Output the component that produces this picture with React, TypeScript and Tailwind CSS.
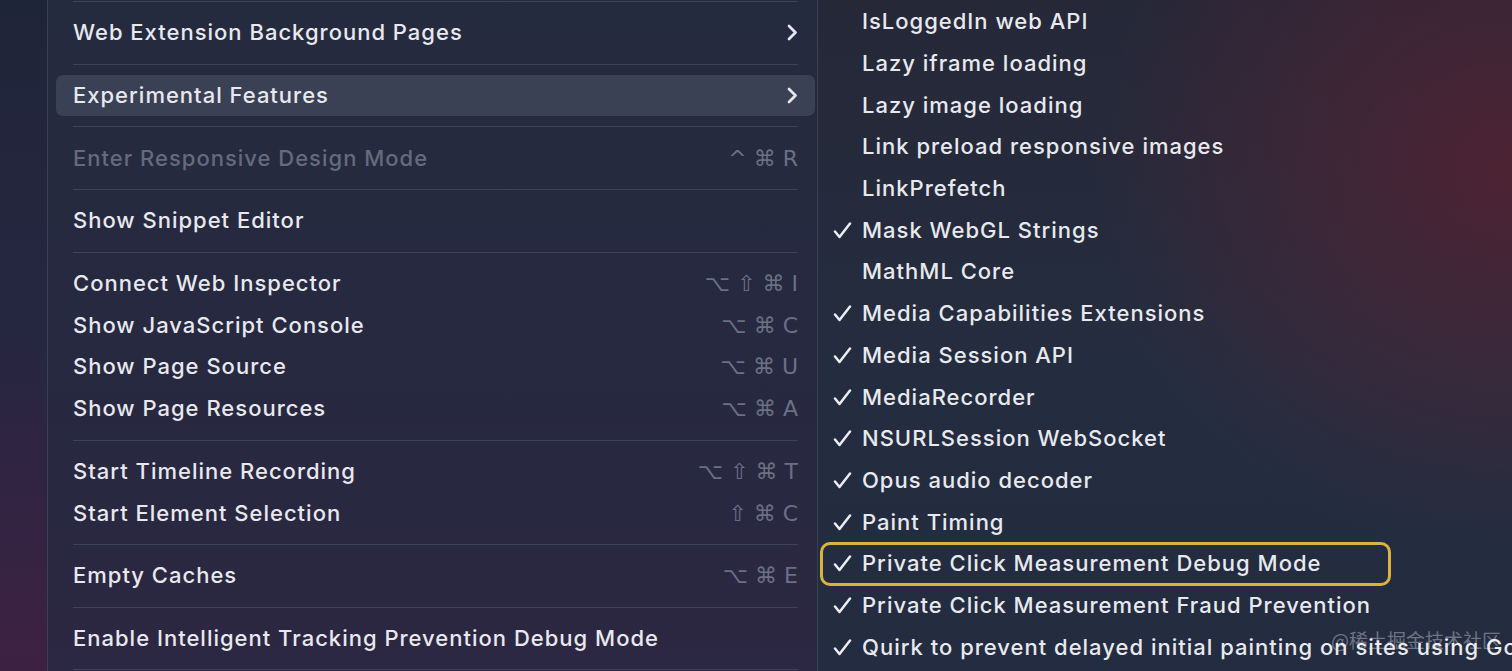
import React from 'react';

type Item = { label: string; keys?: string[]; sub?: boolean; disabled?: boolean; active?: boolean };

const sections: Item[][] = [
  [{ label: 'Web Extension Background Pages', sub: true }],
  [{ label: 'Experimental Features', sub: true, active: true }],
  [{ label: 'Enter Responsive Design Mode', keys: ['^', '⌘', 'R'], disabled: true }],
  [{ label: 'Show Snippet Editor' }],
  [
    { label: 'Connect Web Inspector', keys: ['⌥', '⇧', '⌘', 'I'] },
    { label: 'Show JavaScript Console', keys: ['⌥', '⌘', 'C'] },
    { label: 'Show Page Source', keys: ['⌥', '⌘', 'U'] },
    { label: 'Show Page Resources', keys: ['⌥', '⌘', 'A'] },
  ],
  [
    { label: 'Start Timeline Recording', keys: ['⌥', '⇧', '⌘', 'T'] },
    { label: 'Start Element Selection', keys: ['⇧', '⌘', 'C'] },
  ],
  [{ label: 'Empty Caches', keys: ['⌥', '⌘', 'E'] }],
  [{ label: 'Enable Intelligent Tracking Prevention Debug Mode' }],
];

const features: { label: string; on: boolean; boxed?: boolean }[] = [
  { label: 'IsLoggedIn web API', on: false },
  { label: 'Lazy iframe loading', on: false },
  { label: 'Lazy image loading', on: false },
  { label: 'Link preload responsive images', on: false },
  { label: 'LinkPrefetch', on: false },
  { label: 'Mask WebGL Strings', on: true },
  { label: 'MathML Core', on: false },
  { label: 'Media Capabilities Extensions', on: true },
  { label: 'Media Session API', on: true },
  { label: 'MediaRecorder', on: true },
  { label: 'NSURLSession WebSocket', on: true },
  { label: 'Opus audio decoder', on: true },
  { label: 'Paint Timing', on: true },
  { label: 'Private Click Measurement Debug Mode', on: true, boxed: true },
  { label: 'Private Click Measurement Fraud Prevention', on: true },
  { label: 'Quirk to prevent delayed initial painting on sites using Google Fonts', on: true },
];

function Chevron() {
  return (
    <svg width="11" height="17" viewBox="0 0 11 17" fill="none">
      <path d="M2 2 L8.5 8.5 L2 15" stroke="#e6e7ee" strokeWidth="2.8" strokeLinecap="round" strokeLinejoin="round" />
    </svg>
  );
}

function Check() {
  return (
    <svg width="19" height="17" viewBox="0 0 19 17" fill="none">
      <path d="M2 9.5 L6.5 15 L17 1.5" stroke="#eceef3" strokeWidth="2.5" strokeLinecap="round" strokeLinejoin="round" />
    </svg>
  );
}

function Separator() {
  return <div className="h-px bg-[#3d4257]" />;
}

function MenuRow({ item }: { item: Item }) {
  return (
    <div
      className={`-mx-[17px] px-[17px] h-[41.7px] flex items-center justify-between rounded-[7px] ${
        item.active ? 'bg-[#3b4154]' : ''
      }`}
    >
      <span className={item.disabled ? 'text-[#656a7e]' : 'text-[#e8e8ee]'}>{item.label}</span>
      {item.sub && <Chevron />}
      {item.keys && (
        <span className="flex items-center gap-[7px] text-[22px] tracking-normal text-[#6b7084] font-['DejaVu_Sans',sans-serif] font-normal">
          {item.keys.map((k, i) => (
            <span key={i}>{k}</span>
          ))}
        </span>
      )}
    </div>
  );
}

export default function App() {
  return (
    <div className="relative w-[1512px] h-[671px] overflow-hidden flex font-['Inter','Liberation_Sans',sans-serif] text-[22px] font-medium tracking-[1px]">
      {/* window behind the menu */}
      <div className="w-[47px] shrink-0 bg-gradient-to-b from-[#1f2539] via-[#262641] to-[#3d2143]" />

      {/* main Develop menu */}
      <div className="w-[770px] shrink-0 border-l border-[#3c4057] bg-gradient-to-b from-[#252b3e] via-[#262940] to-[#2c2742] pl-[25px] pr-[19px] pt-px">
        <Separator />
        {sections.map((sec, i) => (
          <div key={i}>
            <div className="py-[10px]">
              {sec.map((item) => (
                <MenuRow key={item.label} item={item} />
              ))}
            </div>
            <Separator />
          </div>
        ))}
      </div>

      {/* Experimental Features submenu */}
      <div className="flex-1 border-l border-[#394052] bg-[radial-gradient(ellipse_420px_380px_at_690px_170px,rgba(110,30,45,0.55),transparent),linear-gradient(to_bottom,#262838,#242d3f_55%,#232c40)] pt-px pl-[15px] overflow-hidden">
        {features.map((f) => (
          <div key={f.label} className="relative h-[41.7px] flex items-center whitespace-nowrap">
            <span className="w-[29px] shrink-0 flex items-center">{f.on && <Check />}</span>
            <span className="text-[#e8e9ee]">{f.label}</span>
            {f.boxed && (
              <span className="absolute -left-[13px] w-[571px] -top-[1px] -bottom-[1px] border-[3px] border-[#d8b43f] rounded-[10px]" />
            )}
          </div>
        ))}
      </div>

      <span className="absolute left-[1331px] top-[626px] text-[19px] font-normal tracking-normal text-white/35 font-['Noto_Sans_CJK_SC',sans-serif]">
        @稀土掘金技术社区
      </span>
    </div>
  );
}
